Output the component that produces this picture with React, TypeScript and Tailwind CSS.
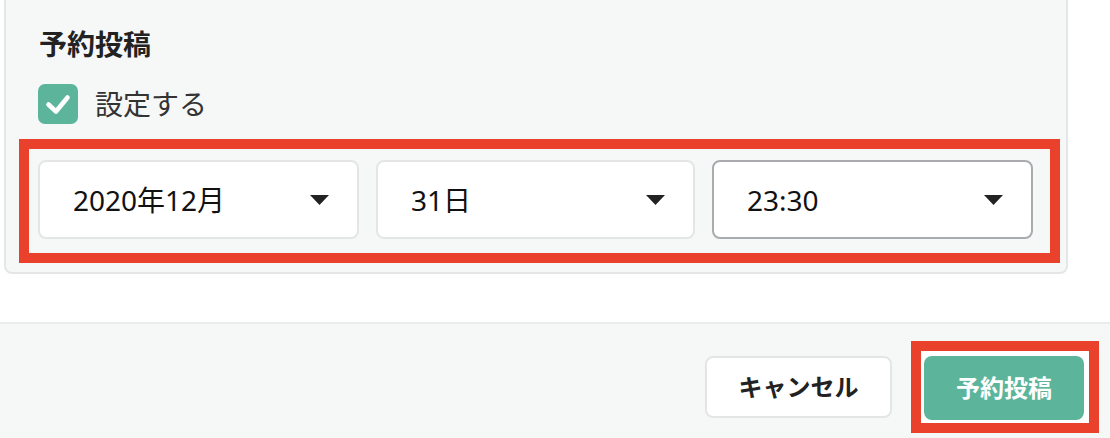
import React from "react";

const FONT = { fontFamily: '"Noto Sans", "Noto Sans CJK JP", sans-serif' };

function Caret() {
  return (
    <svg width="19" height="10" viewBox="0 0 19 10" className="shrink-0">
      <path d="M0 0 H19 L9.5 10 Z" fill="#222" />
    </svg>
  );
}

function SelectBox({ label, focused, width }: { label: string; focused?: boolean; width: string }) {
  return (
    <div
      className={`${width} h-[79px] bg-white rounded-[8px] border-2 flex items-center justify-between pl-[33px] pr-[28px] ${
        focused ? "border-[#a9abaf]" : "border-[#e4e5e5]"
      }`}
    >
      <span className="text-[28px] leading-[40px] text-[#111]">{label}</span>
      <Caret />
    </div>
  );
}

export default function App() {
  return (
    <div className="w-[1110px] h-[438px] bg-white flex flex-col overflow-hidden" style={FONT}>
      <div className="ml-[4px] w-[1064px] h-[274px] shrink-0 bg-[#f6f7f7] border-2 border-t-0 border-[#e5e7e7] rounded-b-[8px] pl-[13px] pt-[24px] flex flex-col">
        <h2 className="pl-[20px] text-[28px] leading-[40px] font-bold text-[#222]">予約投稿</h2>
        <div className="pl-[19px] mt-[20px] flex items-center gap-[17px] h-[40px]">
          <div className="w-[40px] h-[40px] rounded-[7px] bg-[#5cb59b] flex items-center justify-center">
            <svg width="40" height="40" viewBox="0 0 40 40">
              <polyline
                points="10.5,20.5 18,27.5 29.5,13.5"
                fill="none"
                stroke="white"
                strokeWidth="4.6"
                strokeLinecap="round"
                strokeLinejoin="round"
              />
            </svg>
          </div>
          <span className="text-[28px] leading-[40px] text-[#333]">設定する</span>
        </div>
        <div className="mt-[15px] w-[1041px] h-[124px] border-[10px] border-[#e9412b] pl-[9px] pt-[11px] flex gap-[17px]">
          <SelectBox label="2020年12月" width="w-[321px]" />
          <SelectBox label="31日" width="w-[319px]" />
          <SelectBox label="23:30" width="w-[321px]" focused />
        </div>
      </div>
      <div className="mt-[48px] flex-1 border-t-2 border-[#ebeded] bg-[#f6f7f7] flex justify-end items-center pr-[11px] gap-[19px] pt-[12px]">
        <div className="w-[187px] h-[62px] bg-white border-2 border-[#e4e5e5] rounded-[8px] flex items-center justify-center">
          <span className="text-[24px] font-bold text-[#222] leading-none">キャンセル</span>
        </div>
        <div className="w-[188px] h-[92px] border-[10px] border-[#e9412b] bg-white p-[3px] pt-[5px]">
          <div className="w-[160px] h-[64px] rounded-[8px] bg-[#5cb59b] flex items-center justify-center">
            <span className="text-[24px] font-bold text-white leading-none">予約投稿</span>
          </div>
        </div>
      </div>
    </div>
  );
}
